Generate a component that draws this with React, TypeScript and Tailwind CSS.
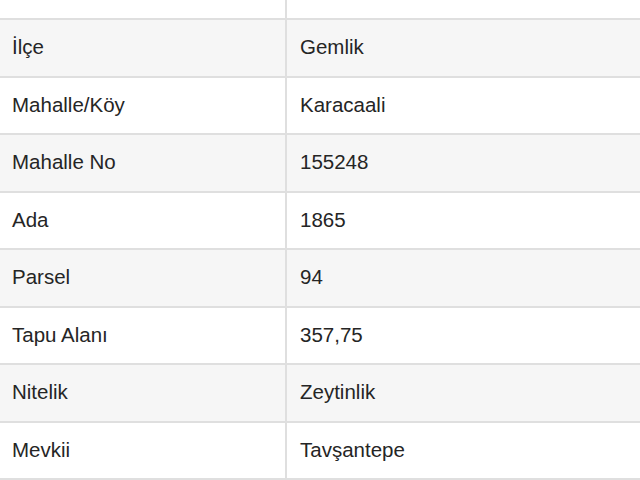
import React from "react";

const rows: [string, string][] = [
  ["İl", "Bursa"],
  ["İlçe", "Gemlik"],
  ["Mahalle/Köy", "Karacaali"],
  ["Mahalle No", "155248"],
  ["Ada", "1865"],
  ["Parsel", "94"],
  ["Tapu Alanı", "357,75"],
  ["Nitelik", "Zeytinlik"],
  ["Mevkii", "Tavşantepe"],
];

export default function App() {
  return (
    <div className="w-[640px] h-[480px] overflow-hidden bg-white text-[20.5px] text-[#252525]" style={{ fontFamily: '"Liberation Sans", Arial, sans-serif' }}>
      <div className="-mt-[37.5px] flex flex-col">
        {rows.map(([k, v], i) => (
          <div
            key={k}
            className={
              i % 2 === 1
                ? "flex h-[57.5px] border-b-2 border-[#dfdfdf] bg-[#f6f6f6]"
                : "flex h-[57.5px] border-b-2 border-[#dfdfdf] bg-white"
            }
          >
            <div className="w-[287px] shrink-0 border-r-2 border-[#dfdfdf] flex items-center pl-[12px]">
              {k}
            </div>
            <div className="flex-1 flex items-center pl-[13px]">{v}</div>
          </div>
        ))}
      </div>
    </div>
  );
}
